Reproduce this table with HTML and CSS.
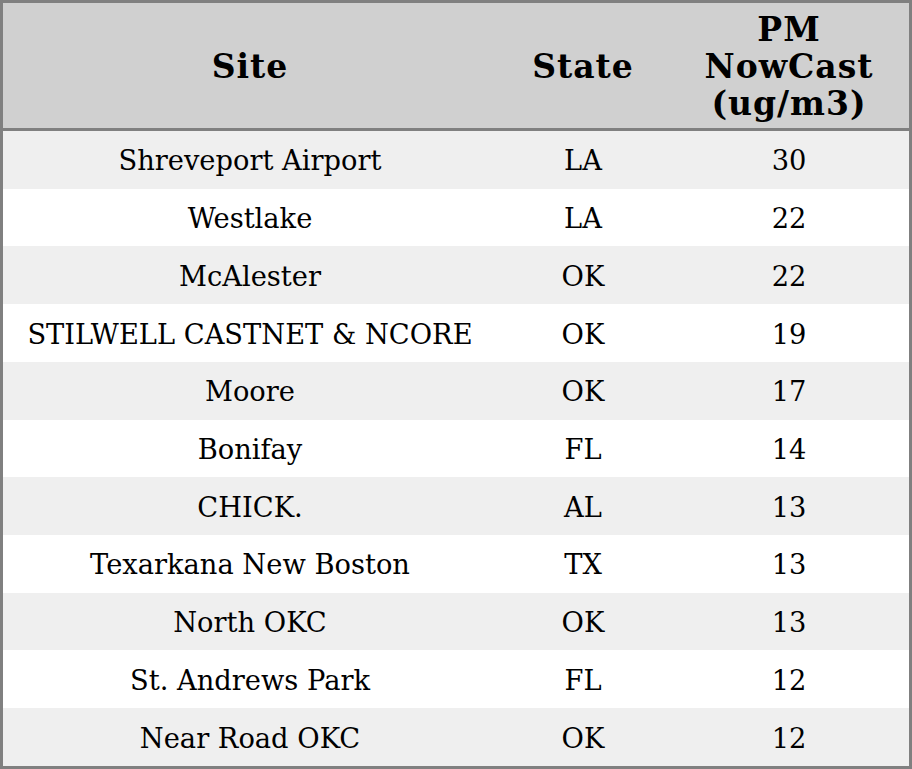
FILE: index.html
```html
<!DOCTYPE html>
<html>
<head>
<meta charset="utf-8">
<link rel="stylesheet" href="styles.css">
</head>
<body>
<table class="aq">
  <colgroup>
    <col class="c-site">
    <col class="c-state">
    <col class="c-pm">
  </colgroup>
  <thead>
    <tr><th>Site</th><th>State</th><th>PM<br>NowCast<br>(ug/m3)</th></tr>
  </thead>
  <tbody>
    <tr><td>Shreveport Airport</td><td>LA</td><td>30</td></tr>
    <tr><td>Westlake</td><td>LA</td><td>22</td></tr>
    <tr><td>McAlester</td><td>OK</td><td>22</td></tr>
    <tr><td>STILWELL CASTNET &amp; NCORE</td><td>OK</td><td>19</td></tr>
    <tr><td>Moore</td><td>OK</td><td>17</td></tr>
    <tr><td>Bonifay</td><td>FL</td><td>14</td></tr>
    <tr><td>CHICK.</td><td>AL</td><td>13</td></tr>
    <tr><td>Texarkana New Boston</td><td>TX</td><td>13</td></tr>
    <tr><td>North OKC</td><td>OK</td><td>13</td></tr>
    <tr><td>St. Andrews Park</td><td>FL</td><td>12</td></tr>
    <tr><td>Near Road OKC</td><td>OK</td><td>12</td></tr>
  </tbody>
</table>
</body>
</html>
```
FILE: styles.css
```css
html, body { margin: 0; padding: 0; background: #ffffff; }
.aq {
  width: 912px;
  border-collapse: separate;
  border-spacing: 0;
  table-layout: fixed;
  border: 3px solid #808080;
  font-family: "DejaVu Serif", serif;
  color: #000;
}
.c-site { width: 494px; }
.c-state { width: 172px; }
.c-pm { width: 240px; }
.aq th {
  background: #d0d0d0;
  font-size: 33px;
  letter-spacing: 1px;
  font-weight: bold;
  line-height: 37px;
  height: 128px;
  box-sizing: border-box;
  padding: 2px 0 0 0;
  border-bottom: 3px solid #808080;
  text-align: center;
  vertical-align: middle;
}
.aq td {
  font-size: 27.3px;
  height: 57.73px;
  box-sizing: border-box;
  padding: 2px 0 0 0;
  text-align: center;
  vertical-align: middle;
}
.aq tbody tr:nth-child(odd) td { background: #efefef; }
.aq tbody tr:nth-child(even) td { background: #ffffff; }
```
